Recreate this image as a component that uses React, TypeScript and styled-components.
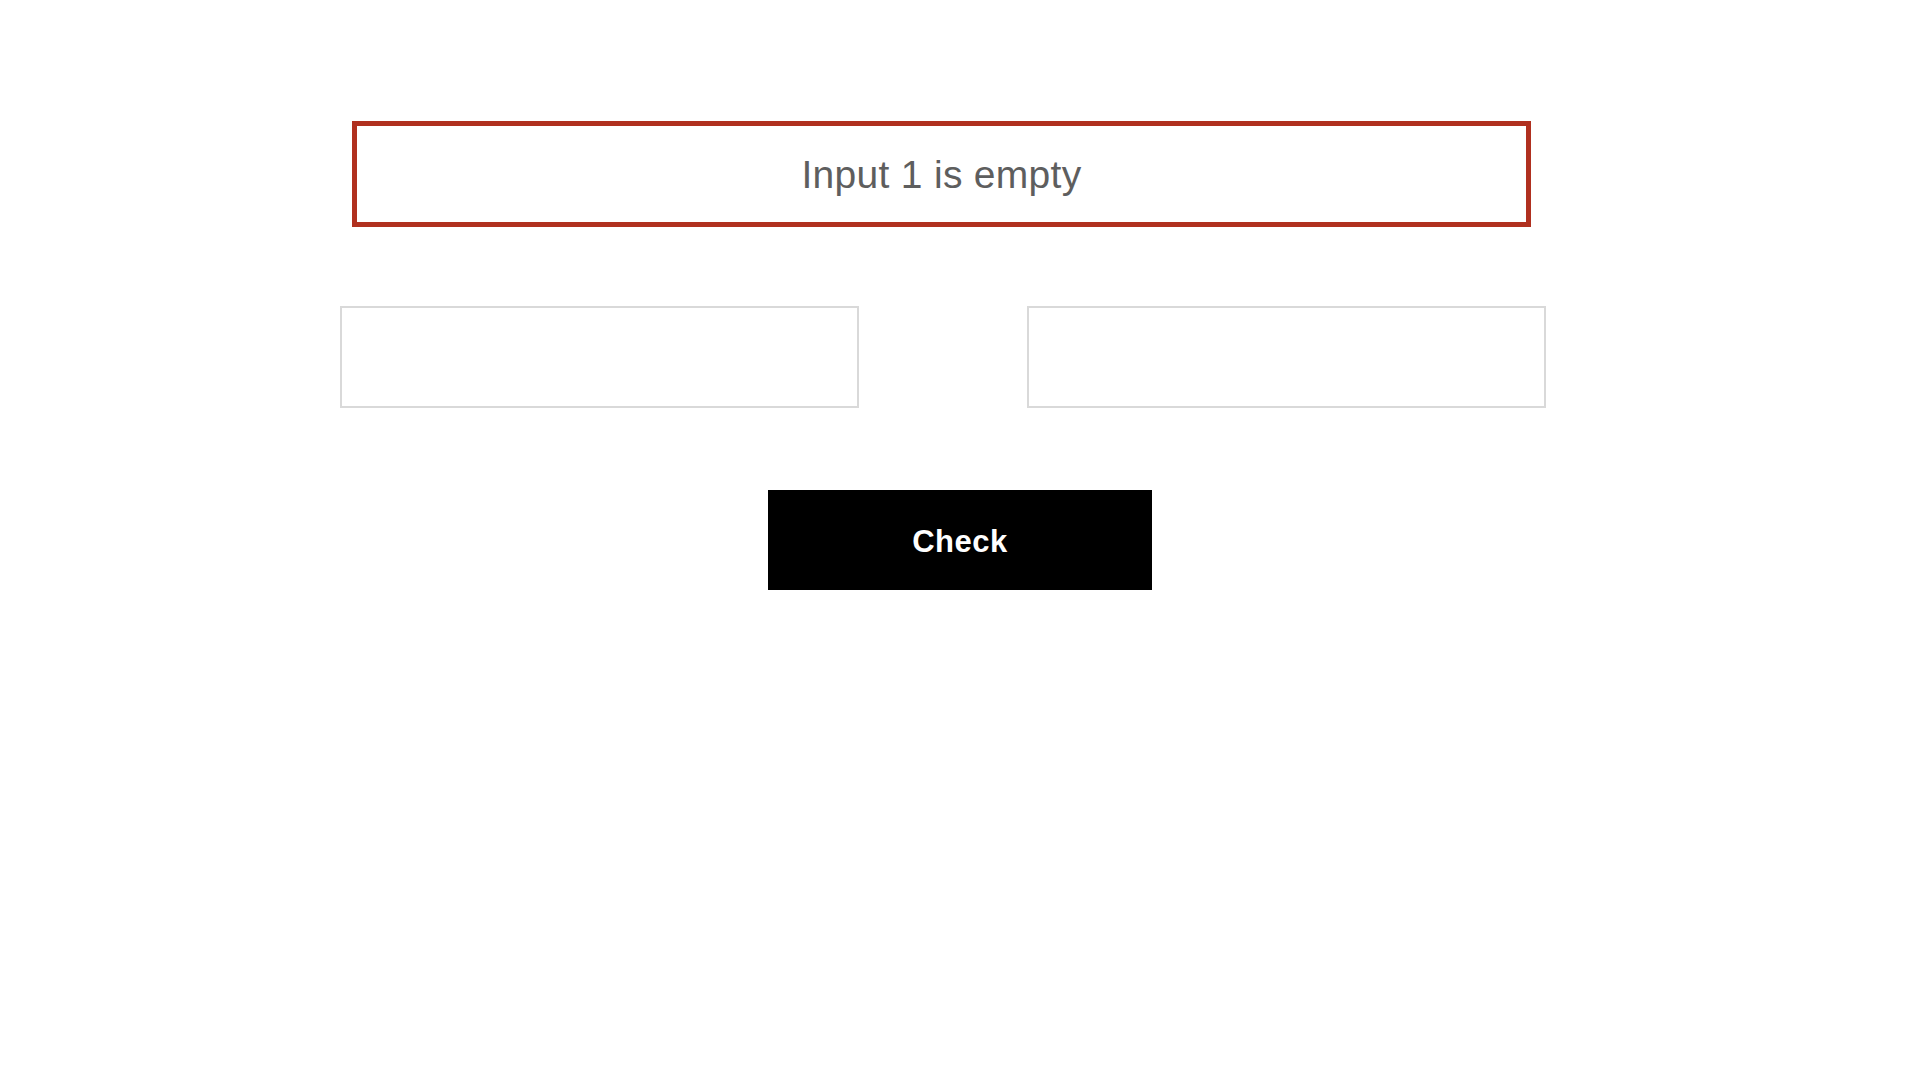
import React, { useState } from 'react';
import styled, { createGlobalStyle } from 'styled-components';

const GlobalStyle = createGlobalStyle`
  html, body {
    margin: 0;
    padding: 0;
    background: #ffffff;
    font-family: 'Liberation Sans', Arial, Helvetica, sans-serif;
  }
`;

const Page = styled.div`
  display: flex;
  flex-direction: column;
  padding-top: 121px;
`;

const ErrorBox = styled.div`
  box-sizing: border-box;
  width: 1179px;
  height: 106px;
  margin-left: 352px;
  border: 5px solid #b0301f;
  display: flex;
  align-items: center;
  justify-content: center;
  color: #5e5e5e;
  font-size: 39px;
  letter-spacing: 0.3px;
  padding-top: 2px;
`;

const InputRow = styled.div`
  display: flex;
  gap: 168px;
  margin-left: 340px;
  margin-top: 79px;
`;

const TextField = styled.input`
  box-sizing: border-box;
  width: 519px;
  height: 102px;
  border: 2px solid #d9d9d9;
  outline: none;
  padding: 0 16px;
  font-size: 30px;
  font-family: inherit;
  background: #fff;
`;

const ButtonRow = styled.div`
  display: flex;
  justify-content: center;
  margin-top: 82px;
`;

const CheckButton = styled.button`
  width: 384px;
  height: 100px;
  border: none;
  padding: 3px 0 0;
  background: #000;
  color: #fff;
  font-family: inherit;
  font-weight: 700;
  font-size: 31px;
  letter-spacing: 0.5px;
  cursor: pointer;
`;

function App() {
  const [first, setFirst] = useState('');
  const [second, setSecond] = useState('');

  return (
    <>
      <GlobalStyle />
      <Page>
        <ErrorBox>Input 1 is empty</ErrorBox>
        <InputRow>
          <TextField value={first} onChange={(e) => setFirst(e.target.value)} />
          <TextField value={second} onChange={(e) => setSecond(e.target.value)} />
        </InputRow>
        <ButtonRow>
          <CheckButton>Check</CheckButton>
        </ButtonRow>
      </Page>
    </>
  );
}

export default App;
